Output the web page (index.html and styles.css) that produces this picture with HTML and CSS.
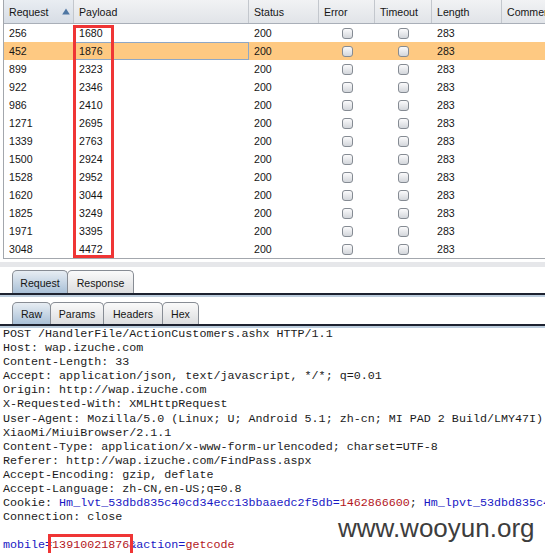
FILE: index.html
```html
<!DOCTYPE html>
<html>
<head>
<meta charset="utf-8">
<link rel="stylesheet" href="styles.css">
</head>
<body>
<div class="page">
  <div class="results">
    <div class="grid head">
      <div class="hc sorted"><span>Request</span><svg class="arrow" width="8" height="7" viewBox="0 0 8 7"><path d="M4 0.5 L7.8 6.5 L0.2 6.5 Z" fill="#4f77a3"/></svg></div>
      <div class="hc">Payload</div>
      <div class="hc">Status</div>
      <div class="hc">Error</div>
      <div class="hc">Timeout</div>
      <div class="hc">Length</div>
      <div class="hc last">Comment</div>
    </div>
    <div class="grid row"><div class="c">256</div><div class="c">1680</div><div class="c">200</div><div class="c cb"><span class="chk"></span></div><div class="c cb"><span class="chk"></span></div><div class="c">283</div><div class="c"></div></div>
    <div class="grid row sel"><div class="c">452</div><div class="c focus">1876</div><div class="c">200</div><div class="c cb"><span class="chk"></span></div><div class="c cb"><span class="chk"></span></div><div class="c">283</div><div class="c"></div></div>
    <div class="grid row"><div class="c">899</div><div class="c">2323</div><div class="c">200</div><div class="c cb"><span class="chk"></span></div><div class="c cb"><span class="chk"></span></div><div class="c">283</div><div class="c"></div></div>
    <div class="grid row"><div class="c">922</div><div class="c">2346</div><div class="c">200</div><div class="c cb"><span class="chk"></span></div><div class="c cb"><span class="chk"></span></div><div class="c">283</div><div class="c"></div></div>
    <div class="grid row"><div class="c">986</div><div class="c">2410</div><div class="c">200</div><div class="c cb"><span class="chk"></span></div><div class="c cb"><span class="chk"></span></div><div class="c">283</div><div class="c"></div></div>
    <div class="grid row"><div class="c">1271</div><div class="c">2695</div><div class="c">200</div><div class="c cb"><span class="chk"></span></div><div class="c cb"><span class="chk"></span></div><div class="c">283</div><div class="c"></div></div>
    <div class="grid row"><div class="c">1339</div><div class="c">2763</div><div class="c">200</div><div class="c cb"><span class="chk"></span></div><div class="c cb"><span class="chk"></span></div><div class="c">283</div><div class="c"></div></div>
    <div class="grid row"><div class="c">1500</div><div class="c">2924</div><div class="c">200</div><div class="c cb"><span class="chk"></span></div><div class="c cb"><span class="chk"></span></div><div class="c">283</div><div class="c"></div></div>
    <div class="grid row"><div class="c">1528</div><div class="c">2952</div><div class="c">200</div><div class="c cb"><span class="chk"></span></div><div class="c cb"><span class="chk"></span></div><div class="c">283</div><div class="c"></div></div>
    <div class="grid row"><div class="c">1620</div><div class="c">3044</div><div class="c">200</div><div class="c cb"><span class="chk"></span></div><div class="c cb"><span class="chk"></span></div><div class="c">283</div><div class="c"></div></div>
    <div class="grid row"><div class="c">1825</div><div class="c">3249</div><div class="c">200</div><div class="c cb"><span class="chk"></span></div><div class="c cb"><span class="chk"></span></div><div class="c">283</div><div class="c"></div></div>
    <div class="grid row"><div class="c">1971</div><div class="c">3395</div><div class="c">200</div><div class="c cb"><span class="chk"></span></div><div class="c cb"><span class="chk"></span></div><div class="c">283</div><div class="c"></div></div>
    <div class="grid row"><div class="c">3048</div><div class="c">4472</div><div class="c">200</div><div class="c cb"><span class="chk"></span></div><div class="c cb"><span class="chk"></span></div><div class="c">283</div><div class="c"></div></div>
    <div class="mark-payload"></div>
  </div>
  <div class="splitter"></div>
  <div class="tabbar top">
    <div class="tab active w-request">Request</div>
    <div class="tab w-response">Response</div>
  </div>
  <div class="tabbar sub">
    <div class="tab active w-raw">Raw</div>
    <div class="tab w-params">Params</div>
    <div class="tab w-headers">Headers</div>
    <div class="tab w-hex">Hex</div>
  </div>
<pre class="raw">POST /HandlerFile/ActionCustomers.ashx HTTP/1.1
Host: wap.izuche.com
Content-Length: 33
Accept: application/json, text/javascript, */*; q=0.01
Origin: http://wap.izuche.com
X-Requested-With: XMLHttpRequest
User-Agent: Mozilla/5.0 (Linux; U; Android 5.1; zh-cn; MI PAD 2 Build/LMY47I)
XiaoMi/MiuiBrowser/2.1.1
Content-Type: application/x-www-form-urlencoded; charset=UTF-8
Referer: http://wap.izuche.com/FindPass.aspx
Accept-Encoding: gzip, deflate
Accept-Language: zh-CN,en-US;q=0.8
Cookie: <span class="k">Hm_lvt_53dbd835c40cd34ecc13bbaaedc2f5db=</span><span class="v">1462866600</span>; <span class="k">Hm_lpvt_53dbd835c40cd34ecc13bbaaedc2f5db=</span><span class="v">1462866654</span>
Connection: close

<span class="k">mobile=</span><span class="v boxed">13910021876</span><span class="k">&amp;action=</span><span class="v">getcode</span></pre>
  <div class="watermark">www.wooyun.org</div>
</div>
</body>
</html>
```
FILE: styles.css
```css
html, body {
  margin: 0;
  padding: 0;
  background: #ffffff;
}
body {
  width: 545px;
  height: 557px;
  overflow: hidden;
  font-family: "Liberation Sans", Arial, sans-serif;
  font-size: 10.6px;
  color: #151515;
}
.page {
  position: relative;
  display: flex;
  flex-direction: column;
  width: 545px;
  height: 557px;
  overflow: hidden;
}
.results {
  position: relative;
  margin-left: 3px;
  width: 542px;
  border-left: 1px solid #a3a7ad;
  border-bottom: 1px solid #a3a7ad;
  box-sizing: border-box;
  overflow: hidden;
  flex: none;
}
.grid {
  display: grid;
  grid-template-columns: 70px 175px 70px 56px 57px 70px 1fr;
}
.head {
  height: 24px;
  border-bottom: 1px solid #a9afb8;
  box-sizing: border-box;
  background: linear-gradient(#f1f2f4, #e1e4e8);
}
.hc {
  display: flex;
  align-items: center;
  padding-left: 5px;
  border-right: 1px solid #c3c7cd;
  box-sizing: border-box;
  white-space: nowrap;
  overflow: hidden;
}
.hc.last { border-right: none; }
.hc.sorted {
  justify-content: space-between;
  padding-right: 3px;
  background: linear-gradient(#e9edf2, #d7dde5);
}
.arrow { display: block; margin-top: -1px; }
.row {
  height: 18px;
}
.row.sel { background: #fec982; }
.c {
  display: flex;
  align-items: center;
  padding-left: 5px;
  box-sizing: border-box;
  white-space: nowrap;
  overflow: hidden;
}
.c.focus {
  box-shadow: inset 0 0 0 1px #8ea7c6;
  margin-left: 1px;
  padding-left: 4px;
}
.c.cb {
  justify-content: center;
  padding-left: 0;
}
.chk {
  display: block;
  width: 11px;
  height: 11px;
  box-sizing: border-box;
  border: 1px solid #858b93;
  border-radius: 3px;
  background: linear-gradient(#fbfbfc, #d3d6db);
}
.mark-payload {
  position: absolute;
  left: 69px;
  top: 25px;
  width: 41px;
  height: 233px;
  border: 3px solid #ef3535;
  box-sizing: border-box;
}
.splitter {
  flex: none;
  height: 5px;
  margin-top: 3px;
  background: #e6e7ea;
}
.tabbar {
  flex: none;
  display: flex;
  padding-left: 12px;
  border-bottom: 2px solid #1d2230;
  box-shadow: 0 2px 0 #bccddd;
}
.tabbar.top {
  margin-top: 3px;
  height: 23px;
}
.tabbar.sub {
  margin-top: 7px;
  height: 22px;
}
.tab {
  display: flex;
  align-items: center;
  justify-content: center;
  box-sizing: border-box;
  border: 1px solid #878c94;
  border-bottom: none;
  border-radius: 5px 5px 0 0;
  background: linear-gradient(#fafafa, #dcdddf);
  margin-right: -1px;
  padding-top: 1px;
}
.tab.active {
  background: linear-gradient(#e7edf3, #a9c0d7);
}
.w-request { width: 56px; }
.w-response { width: 67px; }
.w-raw { width: 39px; }
.w-params { width: 54px; }
.w-headers { width: 60px; }
.w-hex { width: 37px; }
.raw {
  flex: none;
  margin: 1px 0 0 0;
  padding-left: 3px;
  font-family: "Liberation Mono", "Courier New", monospace;
  font-size: 11.7px;
  line-height: 14.1px;
  color: #1b1b1b;
  white-space: pre;
  overflow: hidden;
}
.k { color: #1818c4; }
.v { color: #b3161c; }
.boxed {
  outline: 3px solid #ef3535;
  outline-offset: 1px;
}
.watermark {
  position: absolute;
  left: 338px;
  top: 515px;
  font-family: "Liberation Sans", Arial, sans-serif;
  font-size: 26px;
  line-height: 26px;
  color: #3d3d3d;
  white-space: nowrap;
}
```
